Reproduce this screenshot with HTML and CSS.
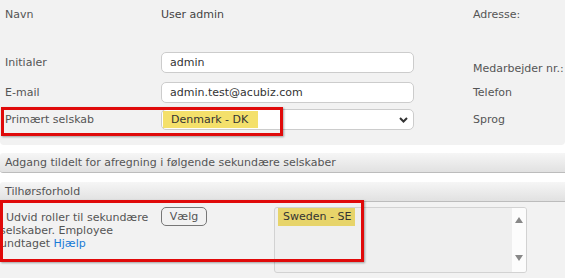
FILE: index.html
```html
<!DOCTYPE html>
<html lang="da">
<head>
    <meta charset="UTF-8">
    <title>Bruger</title>
    <link rel="stylesheet" href="styles.css">
</head>
<body>
    <div class="panel">
        <div class="row row-name">
            <span class="label">Navn</span>
            <span class="value">User admin</span>
            <span class="label side">Adresse:</span>
        </div>
        <div class="row row-init">
            <span class="label">Initialer</span>
            <input class="field" type="text" value="admin">
            <span class="label side side-low">Medarbejder nr.:</span>
        </div>
        <div class="row row-mail">
            <span class="label">E-mail</span>
            <input class="field" type="text" value="admin.test@acubiz.com">
            <span class="label side">Telefon</span>
        </div>
        <div class="row row-company">
            <span class="label">Primært selskab</span>
            <div class="field select">
                <span class="mark mark-dk">Denmark - DK</span>
                <svg class="chevron" width="9" height="6" viewBox="0 0 9 6">
                    <polyline points="1,1 4.5,4.5 8,1" fill="none" stroke="#333" stroke-width="2"/>
                </svg>
            </div>
            <span class="label side">Sprog</span>
            <div class="callout callout-company"></div>
        </div>
    </div>

    <div class="bar bar-first">Adgang tildelt for afregning i følgende sekundære selskaber</div>
    <div class="bar bar-second">Tilhørsforhold</div>

    <div class="assign">
        <p class="assign-text">Udvid roller til sekundære selskaber. Employee undtaget <a href="#" class="help">Hjælp</a></p>
        <div><button class="pick-btn">Vælg</button></div>
        <div class="listbox">
            <div class="options">
                <span class="mark mark-se">Sweden - SE</span>
            </div>
            <div class="scroll">
                <span class="arrow arrow-up"></span>
                <span class="arrow arrow-down"></span>
            </div>
        </div>
        <div class="callout callout-assign"></div>
    </div>
</body>
</html>
```

FILE: styles.css
```css
* {
    box-sizing: border-box;
}

body {
    margin: 0;
    font-family: "DejaVu Sans", Verdana, sans-serif;
    font-size: 11px;
    color: #555;
    background: #fff;
    overflow: hidden;
}

.panel {
    background: #f2f2f2;
    height: 145px;
    border-radius: 0 0 4px 4px;
}

.row {
    display: grid;
    grid-template-columns: 156px 253px 1fr;
    align-items: center;
    padding-left: 5px;
    position: relative;
    height: 21px;
}

.row-name {
    height: 28px;
}

.row-init {
    margin-top: 21px;
}

.row-mail {
    margin-top: 12px;
}

.row-company {
    margin-top: 6px;
}

.label {
    white-space: nowrap;
}

.value {
    color: #444;
}

.side {
    padding-left: 59px;
}

.side-low {
    margin-top: 13px;
}

.field {
    width: 253px;
    height: 21px;
    border: 1px solid #ccc;
    border-radius: 5px;
    background: #fff;
    padding: 0 8px;
    font: inherit;
    color: #333;
    outline: none;
}

.select {
    display: flex;
    align-items: center;
    justify-content: space-between;
    padding: 0 5px 0 1px;
}

.mark {
    display: inline-block;
    height: 17px;
    line-height: 17px;
    color: #333;
}

.mark-dk {
    width: 95px;
    padding-left: 8px;
    background: #f4e06b;
}

.chevron {
    display: block;
}

.callout {
    position: absolute;
    border: 3px solid #e00a0a;
    box-shadow: 1px 1px 2px rgba(0, 0, 0, 0.35);
    pointer-events: none;
}

.callout-company {
    left: 1px;
    top: -2px;
    width: 282px;
    height: 29px;
}

.bar {
    height: 20px;
    line-height: 19px;
    padding-left: 5px;
    background: linear-gradient(#f6f6f6, #e1e1e1);
    border-bottom: 1px solid #bcbcbc;
    border-radius: 3px 0 0 3px;
    white-space: nowrap;
}

.bar-first {
    margin-top: 8px;
}

.bar-second {
    margin-top: 9px;
}

.assign {
    position: relative;
    display: grid;
    grid-template-columns: 161px 113px 253px;
    align-items: start;
    background: #f2f2f2;
    padding-top: 5px;
    height: 80px;
}

.assign-text {
    margin: 4px 0 0;
    width: 156px;
    line-height: 13px;
    text-indent: 6px;
}

.help {
    color: #1a7bd6;
    text-decoration: none;
}

.pick-btn {
    width: 46px;
    height: 19px;
    padding: 0;
    border: 1px solid #777;
    border-radius: 5px;
    background: transparent;
    font: inherit;
    color: #555;
    line-height: 15px;
}

.listbox {
    display: flex;
    height: 66px;
    border: 1px solid #d2d2d2;
    border-radius: 3px;
    background: #efefef;
    overflow: hidden;
}

.options {
    flex: 1;
    padding: 0 0 0 3px;
}

.mark-se {
    width: 77px;
    height: 18px;
    line-height: 18px;
    padding-left: 5px;
    background: #e7d46a;
    white-space: nowrap;
}

.scroll {
    width: 14px;
    background: #fcfcfc;
    display: flex;
    flex-direction: column;
    justify-content: space-between;
    align-items: center;
    padding: 9px 0 11px;
}

.arrow {
    width: 0;
    height: 0;
    border-left: 4px solid transparent;
    border-right: 4px solid transparent;
}

.arrow-up {
    border-bottom: 6px solid #888;
}

.arrow-down {
    border-top: 6px solid #888;
}

.callout-assign {
    left: 0;
    top: -2px;
    width: 364px;
    height: 62px;
}
```
